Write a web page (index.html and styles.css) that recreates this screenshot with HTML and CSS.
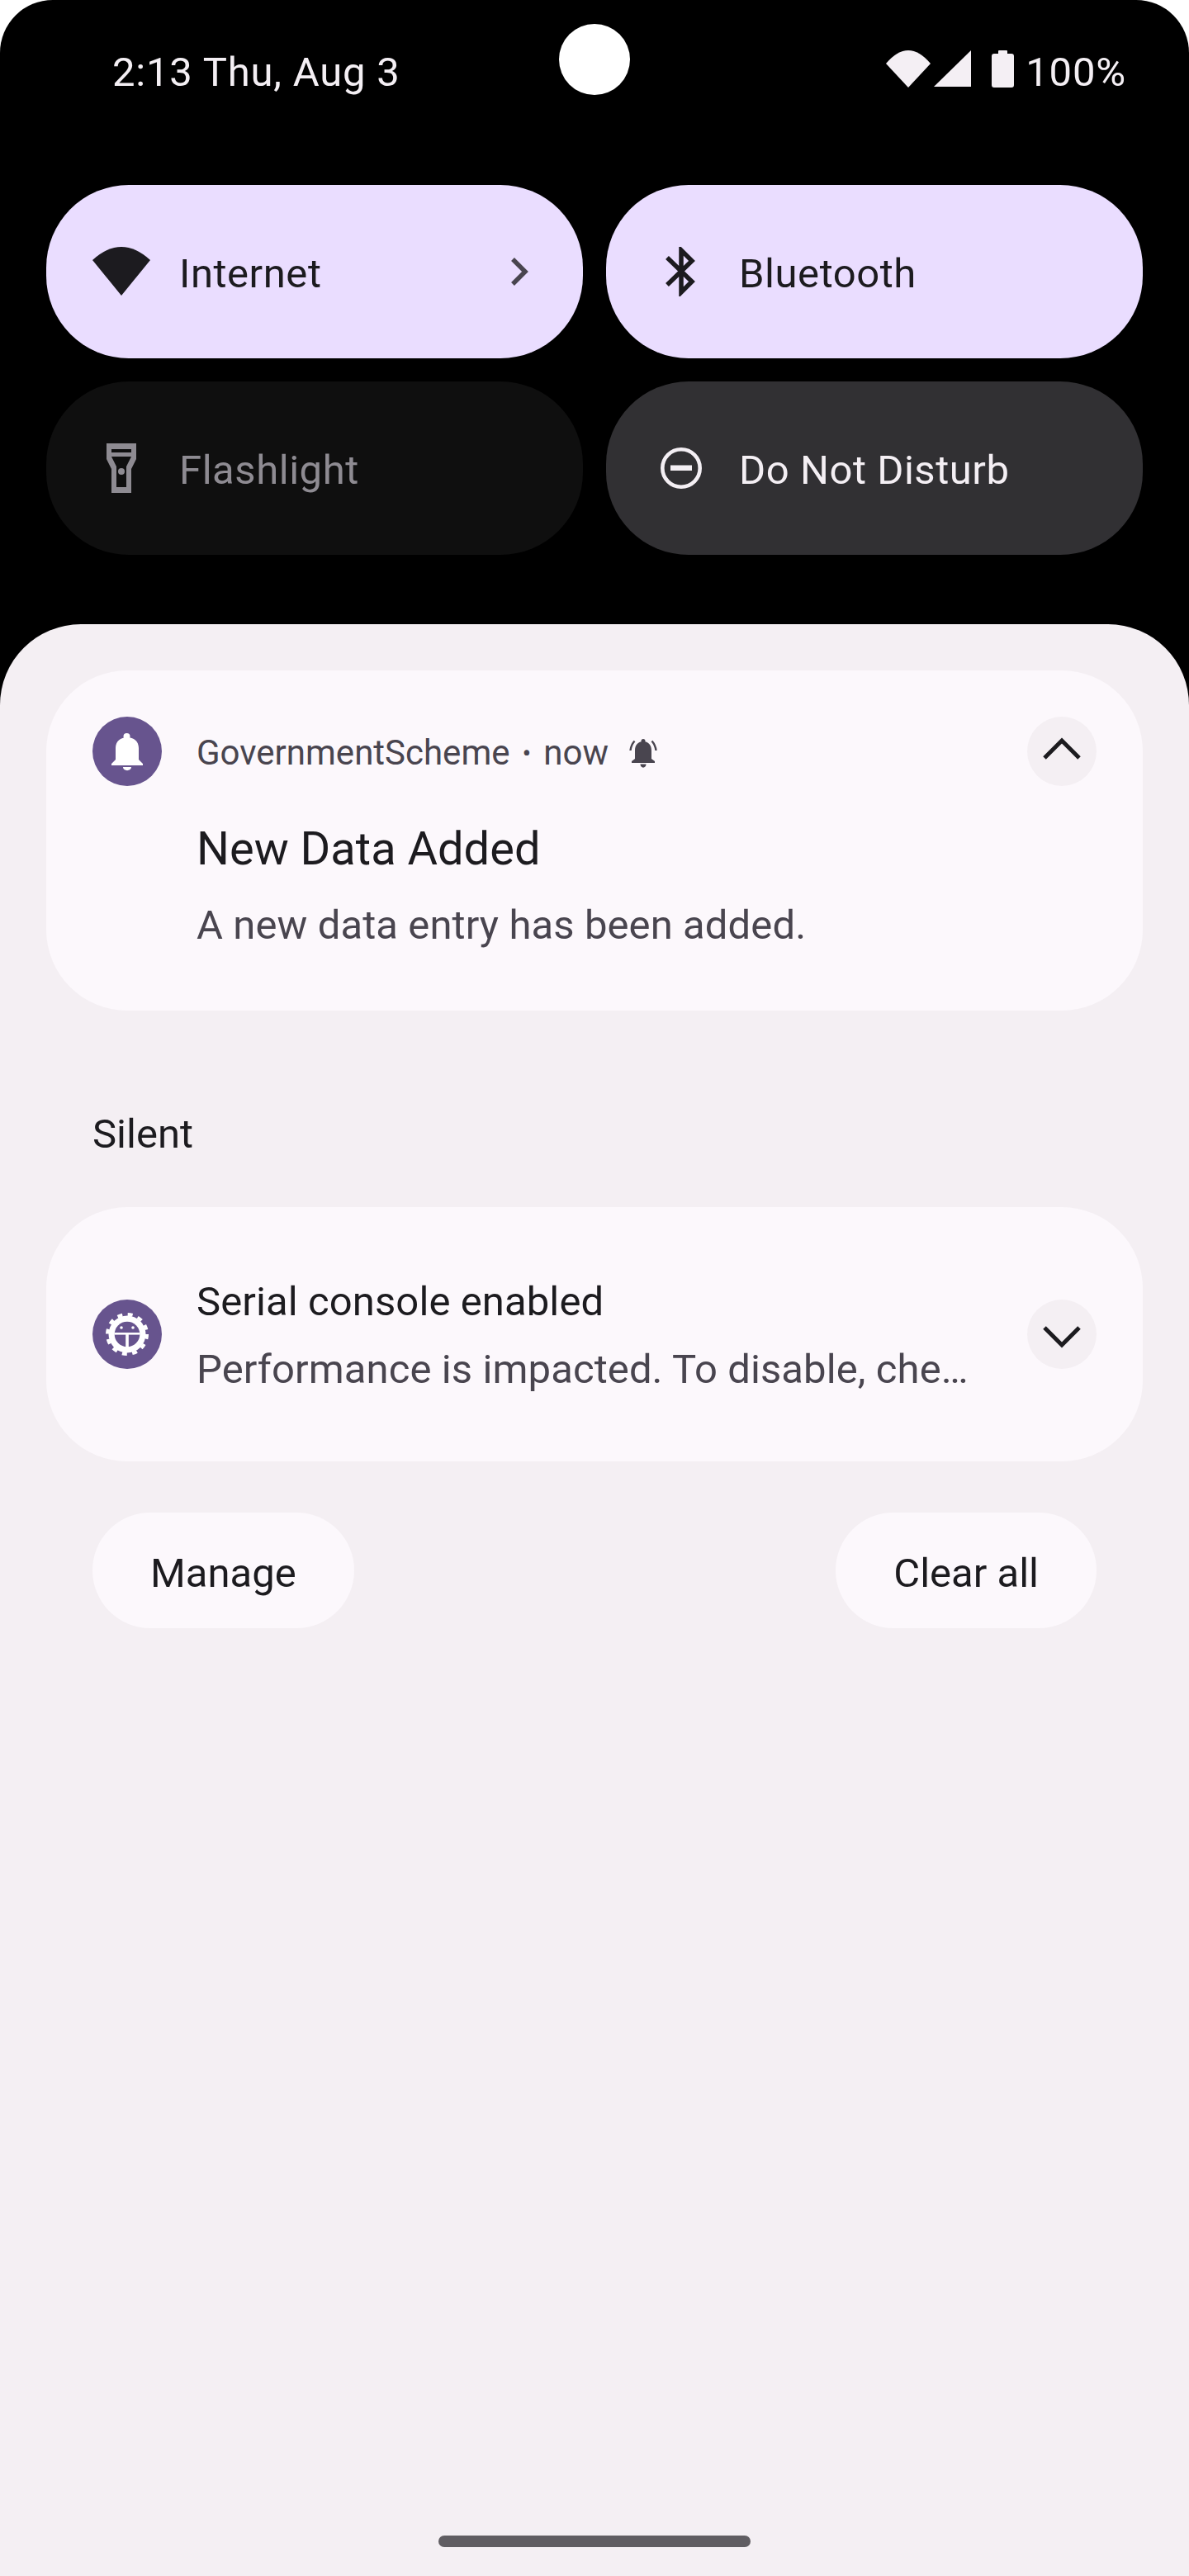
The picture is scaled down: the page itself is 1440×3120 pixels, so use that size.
FILE: index.html
```html
<!DOCTYPE html>
<html lang="en">
<head>
    <meta charset="UTF-8">
    <meta name="viewport" content="width=device-width, initial-scale=1.0">
    <title>Notification shade</title>
    <link rel="stylesheet" href="styles.css">
</head>
<body>
    <div class="screen">
        <div class="camera"></div>

        <!-- Status bar -->
        <div class="status-bar">
            <span class="status-time">2:13 Thu, Aug 3</span>
            <div class="status-icons">
                <svg class="icon-wifi" width="54" height="45" viewBox="0 0 54 45"><path d="M0 16 Q27 -16 54 16 L27 45 Z"/></svg>
                <svg class="icon-signal" width="45" height="44" viewBox="0 0 45 44"><path d="M45 0 V44 H0 Z"/></svg>
                <svg class="icon-battery" width="27" height="45" viewBox="0 0 27 45"><path d="M8 4 V1 Q8 0 9 0 H18 Q19 0 19 1 V4 H24 Q27 4 27 7 V42 Q27 45 24 45 H3 Q0 45 0 42 V7 Q0 4 3 4 Z"/></svg>
                <span class="status-battery">100%</span>
            </div>
        </div>

        <!-- Quick settings -->
        <div class="tiles">
            <div class="tile tile-on">
                <svg class="tile-icon" width="70" height="60" viewBox="0 0 70 60"><path fill="#1c1b1f" d="M0 16 Q35 -16 70 16 L35 59 Z"/></svg>
                <span class="tile-label">Internet</span>
                <svg class="tile-arrow" width="22" height="36" viewBox="0 0 22 36"><path d="M3 3 L18 18 L3 33" fill="none" stroke="#49454f" stroke-width="5.5"/></svg>
            </div>
            <div class="tile tile-on">
                <svg class="tile-icon" width="70" height="60" viewBox="0 0 70 60"><path d="M18 13 L48 42 L35 55 V4 L48 17 L18 46" fill="none" stroke="#1c1b1f" stroke-width="5.5"/></svg>
                <span class="tile-label">Bluetooth</span>
            </div>
            <div class="tile tile-off">
                <svg class="tile-icon" width="70" height="60" viewBox="0 0 70 60"><path fill="#8e8b92" fill-rule="evenodd" d="M17 0 H53 V19 L47 31 V60 H23 V31 L17 19 Z M23 7 V11 H47 V7 Z M23 16 L29 28 V53 H41 V28 L47 16 Z"/><circle cx="35" cy="34" r="4" fill="#8e8b92"/></svg>
                <span class="tile-label">Flashlight</span>
            </div>
            <div class="tile tile-dark">
                <svg class="tile-icon" width="70" height="60" viewBox="0 0 70 60"><circle cx="35" cy="30" r="22.7" fill="none" stroke="#f4eff4" stroke-width="4.6"/><rect x="22" y="26.5" width="26" height="6.5" fill="#f4eff4"/></svg>
                <span class="tile-label">Do Not Disturb</span>
            </div>
        </div>

        <!-- Notifications -->
        <div class="sheet">
            <div class="card card-expanded">
                <div class="card-head">
                    <svg class="app-icon" width="84" height="84" viewBox="0 0 84 84">
                        <circle cx="42" cy="42" r="42" fill="#67548e"/>
                        <circle cx="41.5" cy="24" r="4" fill="#fff"/>
                        <path fill="#fff" d="M23 59 V57 L28 52 V38 C28 30 34 25 42 25 C50 25 56 30 56 38 V52 L61 57 V59 Z"/>
                        <path fill="#fff" d="M37 61 H47 C47 66.500 37 66.500 37 61 Z"/>
                    </svg>
                    <div class="card-meta">
                        <span>GovernmentScheme</span>
                        <span class="meta-dot">•</span>
                        <span>now</span>
                        <svg class="meta-bell" width="36" height="36" viewBox="0 0 36 36">
                            <circle cx="18" cy="3.500" r="2.500" fill="#49454f"/>
                            <path fill="#49454f" d="M4 30 V28 L8 25 V15 C8 8 12 4 18 4 C24 4 28 8 28 15 V25 L32 28 V30 Z"/>
                            <path fill="#49454f" d="M14.500 31.500 H21.500 C21.500 37 14.500 37 14.500 31.500 Z"/>
                            <path fill="none" stroke="#49454f" stroke-width="2.400" d="M2.500 15 C3 10 4.500 7 7.500 3.500 M33.500 15 C33 10 31.500 7 28.500 3.500"/>
                        </svg>
                    </div>
                    <div class="expand-btn">
                        <svg width="84" height="84" viewBox="0 0 84 84"><path d="M21 50 L42 29 L63 50" fill="none" stroke="#1c1b1f" stroke-width="5"/></svg>
                    </div>
                </div>
                <div class="card-title">New Data Added</div>
                <div class="card-body">A new data entry has been added.</div>
            </div>

            <div class="section-label">Silent</div>

            <div class="card card-collapsed">
                <svg class="app-icon" width="84" height="84" viewBox="0 0 84 84">
                    <circle cx="42" cy="42" r="42" fill="#67548e"/>
                    <circle cx="42" cy="42" r="22.500" fill="#fff"/>
                    <circle cx="42" cy="42" r="24" fill="none" stroke="#fff" stroke-width="4" stroke-dasharray="6 6.566"/>
                    <circle cx="42" cy="42" r="15.300" fill="#67548e"/>
                    <rect x="26.500" y="40" width="31" height="2.600" fill="#fff"/>
                    <rect x="40.200" y="41" width="3.600" height="17" fill="#fff"/>
                    <circle cx="35" cy="34" r="1.800" fill="#fff"/>
                    <circle cx="49" cy="34" r="1.800" fill="#fff"/>
                </svg>
                <div class="card-text">
                    <div class="line-title">Serial console enabled</div>
                    <div class="line-body">Performance is impacted. To disable, che…</div>
                </div>
                <div class="expand-btn">
                    <svg width="84" height="84" viewBox="0 0 84 84"><path d="M21 34 L42 55 L63 34" fill="none" stroke="#1c1b1f" stroke-width="5"/></svg>
                </div>
            </div>

            <div class="actions">
                <div class="pill">Manage</div>
                <div class="pill">Clear all</div>
            </div>

            <div class="handle"></div>
        </div>
    </div>
</body>
</html>
```

FILE: styles.css
```css
/* General */
body {
    margin: 0;
    background-color: #fff;
    font-family: 'Roboto', sans-serif;
    color: #1c1b1f;
}

.screen {
    position: relative;
    width: 1440px;
    height: 3120px;
    background-color: #000;
    border-radius: 64px 64px 0 0;
    display: flex;
    flex-direction: column;
    overflow: hidden;
}

.camera {
    position: absolute;
    top: 29px;
    left: 677px;
    width: 86px;
    height: 86px;
    border-radius: 50%;
    background-color: #fff;
}

/* Status bar */
.status-bar {
    height: 174px;
    padding: 0 76px 0 136px;
    display: flex;
    justify-content: space-between;
    align-items: center;
    font-size: 49px;
    letter-spacing: 0.8px;
    color: #f4eff4;
    flex-shrink: 0;
}

.status-icons {
    display: flex;
    align-items: center;
}

.status-icons svg {
    fill: #f4eff4;
    margin-bottom: 8px;
}

.icon-signal {
    margin-left: 4px;
}

.icon-battery {
    margin-left: 25px;
}

.status-battery {
    margin-left: 14px;
}

/* Quick settings */
.tiles {
    margin-top: 50px;
    padding: 0 56px;
    display: grid;
    grid-template-columns: 650px 650px;
    gap: 28px;
    flex-shrink: 0;
}

.tile {
    height: 210px;
    border-radius: 100px;
    padding-left: 56px;
    display: flex;
    align-items: center;
    font-size: 49px;
    letter-spacing: 0.55px;
}

.tile-icon {
    flex-shrink: 0;
}

.tile-label {
    margin-left: 35px;
    padding-top: 4px;
    flex: 1;
}

.tile-arrow {
    margin-right: 66px;
}

.tile-on {
    background-color: #eaddff;
    color: #1c1b1f;
}

.tile-off {
    background-color: #0f0f0f;
    color: #8e8b92;
}

.tile-dark {
    background-color: #313033;
    color: #f4eff4;
}

/* Notifications */
.sheet {
    margin-top: 84px;
    flex: 1;
    padding: 56px 56px 0;
    background-color: #f4eff3;
    border-radius: 98px 98px 0 0;
    display: flex;
    flex-direction: column;
}

.card {
    background-color: #fcf8fc;
    border-radius: 98px;
    padding: 0 56px;
}

.card-expanded {
    padding-top: 56px;
    padding-bottom: 68px;
}

.card-head {
    display: flex;
    align-items: center;
}

.app-icon {
    flex-shrink: 0;
    display: block;
}

.card-meta {
    flex: 1;
    margin-left: 42px;
    display: flex;
    align-items: center;
    font-size: 42px;
    color: #49454f;
    padding-top: 3px;
}

.meta-dot {
    margin: 0 15px;
    font-size: 32px;
}

.meta-bell {
    margin-left: 24px;
}

.expand-btn {
    width: 84px;
    height: 84px;
    border-radius: 50%;
    background-color: #f4eff3;
    flex-shrink: 0;
}

.expand-btn svg {
    display: block;
}

.card-title {
    margin: 44px 0 0 126px;
    font-size: 56px;
    line-height: 64px;
    color: #1c1b1f;
}

.card-body {
    margin: 26px 0 0 126px;
    font-size: 49px;
    line-height: 70px;
    letter-spacing: 0.1px;
    color: #49454f;
}

.section-label {
    padding: 120px 0 58px 56px;
    font-size: 49px;
    line-height: 60px;
}

.card-collapsed {
    height: 308px;
    box-sizing: border-box;
    display: flex;
    align-items: center;
}

.card-text {
    flex: 1;
    margin-left: 42px;
    padding-top: 4px;
    font-size: 49px;
    line-height: 82px;
    letter-spacing: 0.1px;
    white-space: nowrap;
}

.line-body {
    color: #49454f;
}

.actions {
    margin-top: 62px;
    padding: 0 56px;
    display: flex;
    justify-content: space-between;
}

.pill {
    height: 140px;
    padding: 0 70px;
    border-radius: 70px;
    background-color: #fcf8fc;
    font-size: 49px;
    line-height: 147px;
}

.handle {
    margin-top: auto;
    margin-bottom: 35px;
    align-self: center;
    width: 378px;
    height: 14px;
    border-radius: 7px;
    background-color: #605d62;
}
```
